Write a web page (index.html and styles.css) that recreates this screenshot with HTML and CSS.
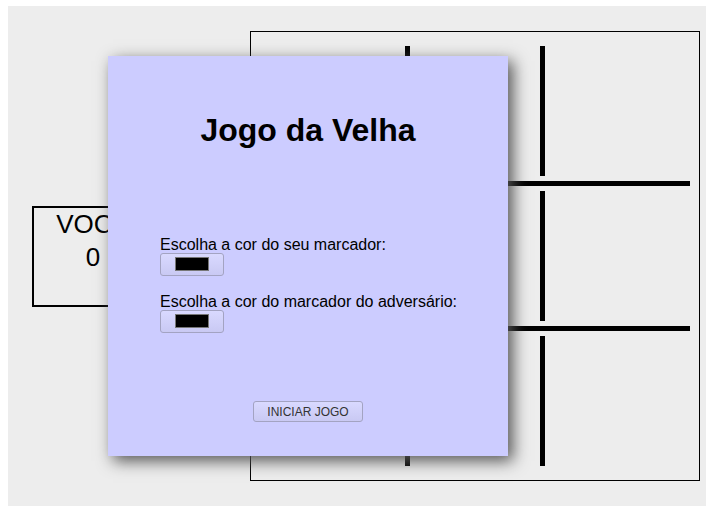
FILE: index.html
```html
<!DOCTYPE html>
<html lang="pt-BR">
<head>
<meta charset="utf-8">
<title>Jogo da Velha</title>
<link rel="stylesheet" href="styles.css">
</head>
<body>
<div class="game">
  <div class="score">
    <div class="score-name">VOCÊ</div>
    <div class="score-value">0</div>
  </div>

  <div class="board">
    <div class="row">
      <div class="cell"></div>
      <div class="cell mid"></div>
      <div class="cell"></div>
    </div>
    <div class="hline"></div>
    <div class="row">
      <div class="cell"></div>
      <div class="cell mid"></div>
      <div class="cell"></div>
    </div>
    <div class="hline"></div>
    <div class="row">
      <div class="cell"></div>
      <div class="cell mid"></div>
      <div class="cell"></div>
    </div>
  </div>

  <div class="modal">
    <h1 class="modal-title">Jogo da Velha</h1>
    <div class="fields">
      <div class="field">
        <label class="field-label" for="cor1">Escolha a cor do seu marcador:</label>
        <input class="color-input" type="color" id="cor1" value="#000000">
      </div>
      <div class="field">
        <label class="field-label" for="cor2">Escolha a cor do marcador do adversário:</label>
        <input class="color-input" type="color" id="cor2" value="#000000">
      </div>
    </div>
    <button class="start-btn" type="button">INICIAR JOGO</button>
  </div>
</div>
</body>
</html>
```

FILE: styles.css
```css
html, body {
  background: #ffffff;
}

body {
  margin: 6px 8px;
  font-family: "Liberation Sans", Arial, sans-serif;
  color: #000;
}

.game {
  position: relative;
  width: 700px;
  height: 500px;
  background: #ededed;
  display: flex;
  align-items: center;
}

.score {
  margin-left: 24px;
  width: 118px;
  height: 97px;
  border: 2px solid #000;
  font-size: 26px;
  line-height: 33px;
  text-align: center;
}

.board {
  margin-left: auto;
  margin-right: 8px;
  width: 430px;
  height: 420px;
  padding: 14px 9px;
  border: 1px solid #000;
  display: flex;
  flex-direction: column;
}

.row {
  display: flex;
  height: 130px;
}

.cell {
  width: 145px;
  height: 130px;
}

.cell.mid {
  width: 130px;
  border-left: 5px solid #000;
  border-right: 5px solid #000;
}

.hline {
  height: 5px;
  margin: 5px 0;
  background: #000;
}

.modal {
  position: absolute;
  left: 100px;
  top: 50px;
  width: 296px;
  height: 365px;
  padding: 35px 52px 0;
  background: #ccccff;
  box-shadow: 5px 5px 15px #555;
  display: flex;
  flex-direction: column;
}

.modal-title {
  margin: 21px 0 0;
  font-size: 32px;
  line-height: 37px;
  font-weight: bold;
  text-align: center;
}

.fields {
  margin-top: 87px;
  display: flex;
  flex-direction: column;
  gap: 17px;
}

.field {
  display: flex;
  flex-direction: column;
  align-items: flex-start;
}

.field-label {
  font-size: 16px;
  line-height: 17px;
  white-space: nowrap;
}

.color-input {
  -webkit-appearance: none;
  appearance: none;
  box-sizing: border-box;
  width: 64px;
  height: 23px;
  margin: 0;
  padding: 0;
  border: 1px solid #a3a3c2;
  border-radius: 3px;
  background: linear-gradient(#d9d9ff, #c9c9f3);
  cursor: pointer;
}

.color-input::-webkit-color-swatch-wrapper {
  padding: 3px 14px 4px;
}

.color-input::-webkit-color-swatch {
  border: 1px solid #777;
  border-radius: 0;
}

.start-btn {
  align-self: center;
  margin-top: 68px;
  box-sizing: border-box;
  width: 110px;
  height: 21px;
  padding: 0;
  border: 1px solid #a3a3c2;
  border-radius: 3px;
  background: linear-gradient(#d9d9ff, #c9c9f3);
  font-family: "Liberation Sans", Arial, sans-serif;
  font-size: 12px;
  color: #333;
  cursor: pointer;
}
```
